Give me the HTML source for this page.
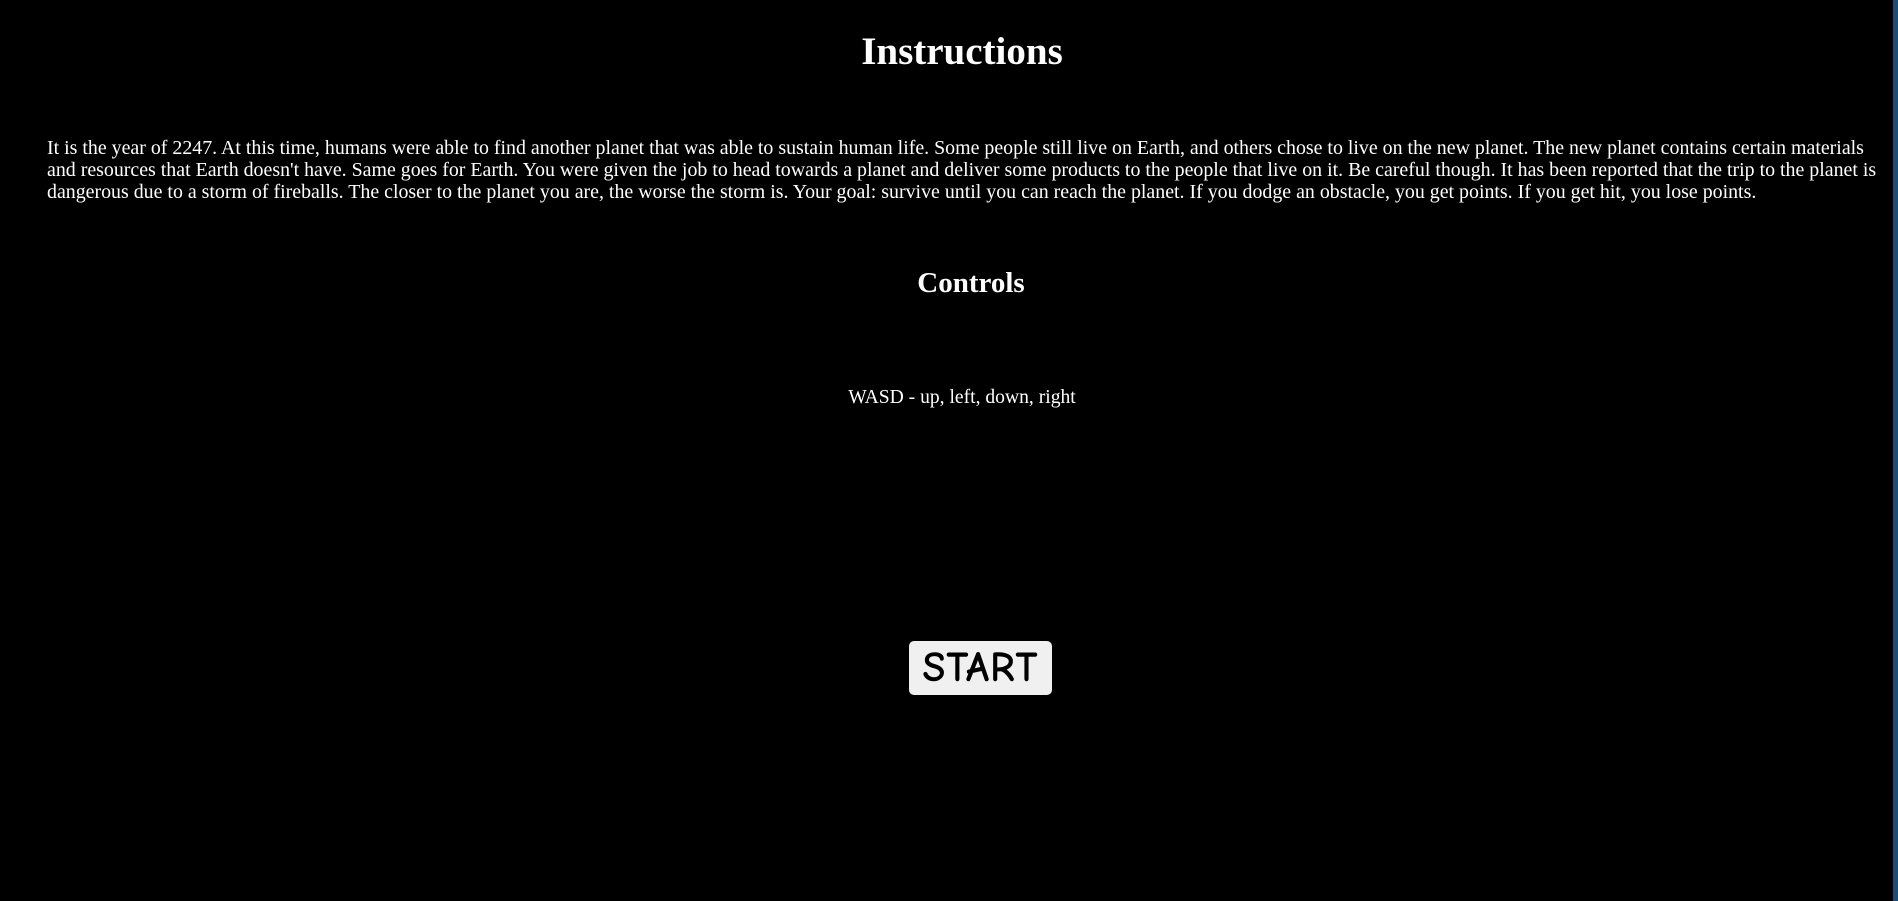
<!DOCTYPE html>
<html><head><meta charset="utf-8"><style>
html,body{margin:0;padding:0;width:1898px;height:901px;overflow:hidden;background:#000;}
body{position:relative;font-family:"Liberation Serif",serif;color:#fff;}
.edge{position:absolute;right:0;top:0;width:5px;height:901px;background:#1b4d78;}
h1{position:absolute;margin:0;left:0;width:1924px;text-align:center;top:29px;font-size:39px;line-height:46px;font-weight:bold;}
p.story{position:absolute;margin:0;left:47px;width:1835px;top:137px;font-size:19.9px;line-height:22px;}
h2{position:absolute;margin:0;left:0;width:1942px;text-align:center;top:265px;font-size:29px;line-height:36px;font-weight:bold;}
p.ctl{position:absolute;margin:0;left:0;width:1924px;text-align:center;top:387px;font-size:19.6px;line-height:22px;}
.btn{position:absolute;left:909px;top:641px;width:143px;height:54px;background:#f0f0f0;border-radius:5px;color:#000;font-family:"Comic Sans MS","Comic Neue","DejaVu Sans",sans-serif;font-size:42px;font-weight:bold;line-height:54px;text-align:center;letter-spacing:1px;}
</style></head><body>
<div class="edge"></div>
<h1>Instructions</h1>
<p class="story">It is the year of 2247. At this time, humans were able to find another planet that was able to sustain human life. Some people still live on Earth, and others chose to live on the new planet. The new planet contains certain materials and resources that Earth doesn't have. Same goes for Earth. You were given the job to head towards a planet and deliver some products to the people that live on it. Be careful though. It has been reported that the trip to the planet is dangerous due to a storm of fireballs. The closer to the planet you are, the worse the storm is. Your goal: survive until you can reach the planet. If you dodge an obstacle, you get points. If you get hit, you lose points.</p>
<h2>Controls</h2>
<p class="ctl">WASD - up, left, down, right</p>
<div class="btn">START</div>
</body></html>
